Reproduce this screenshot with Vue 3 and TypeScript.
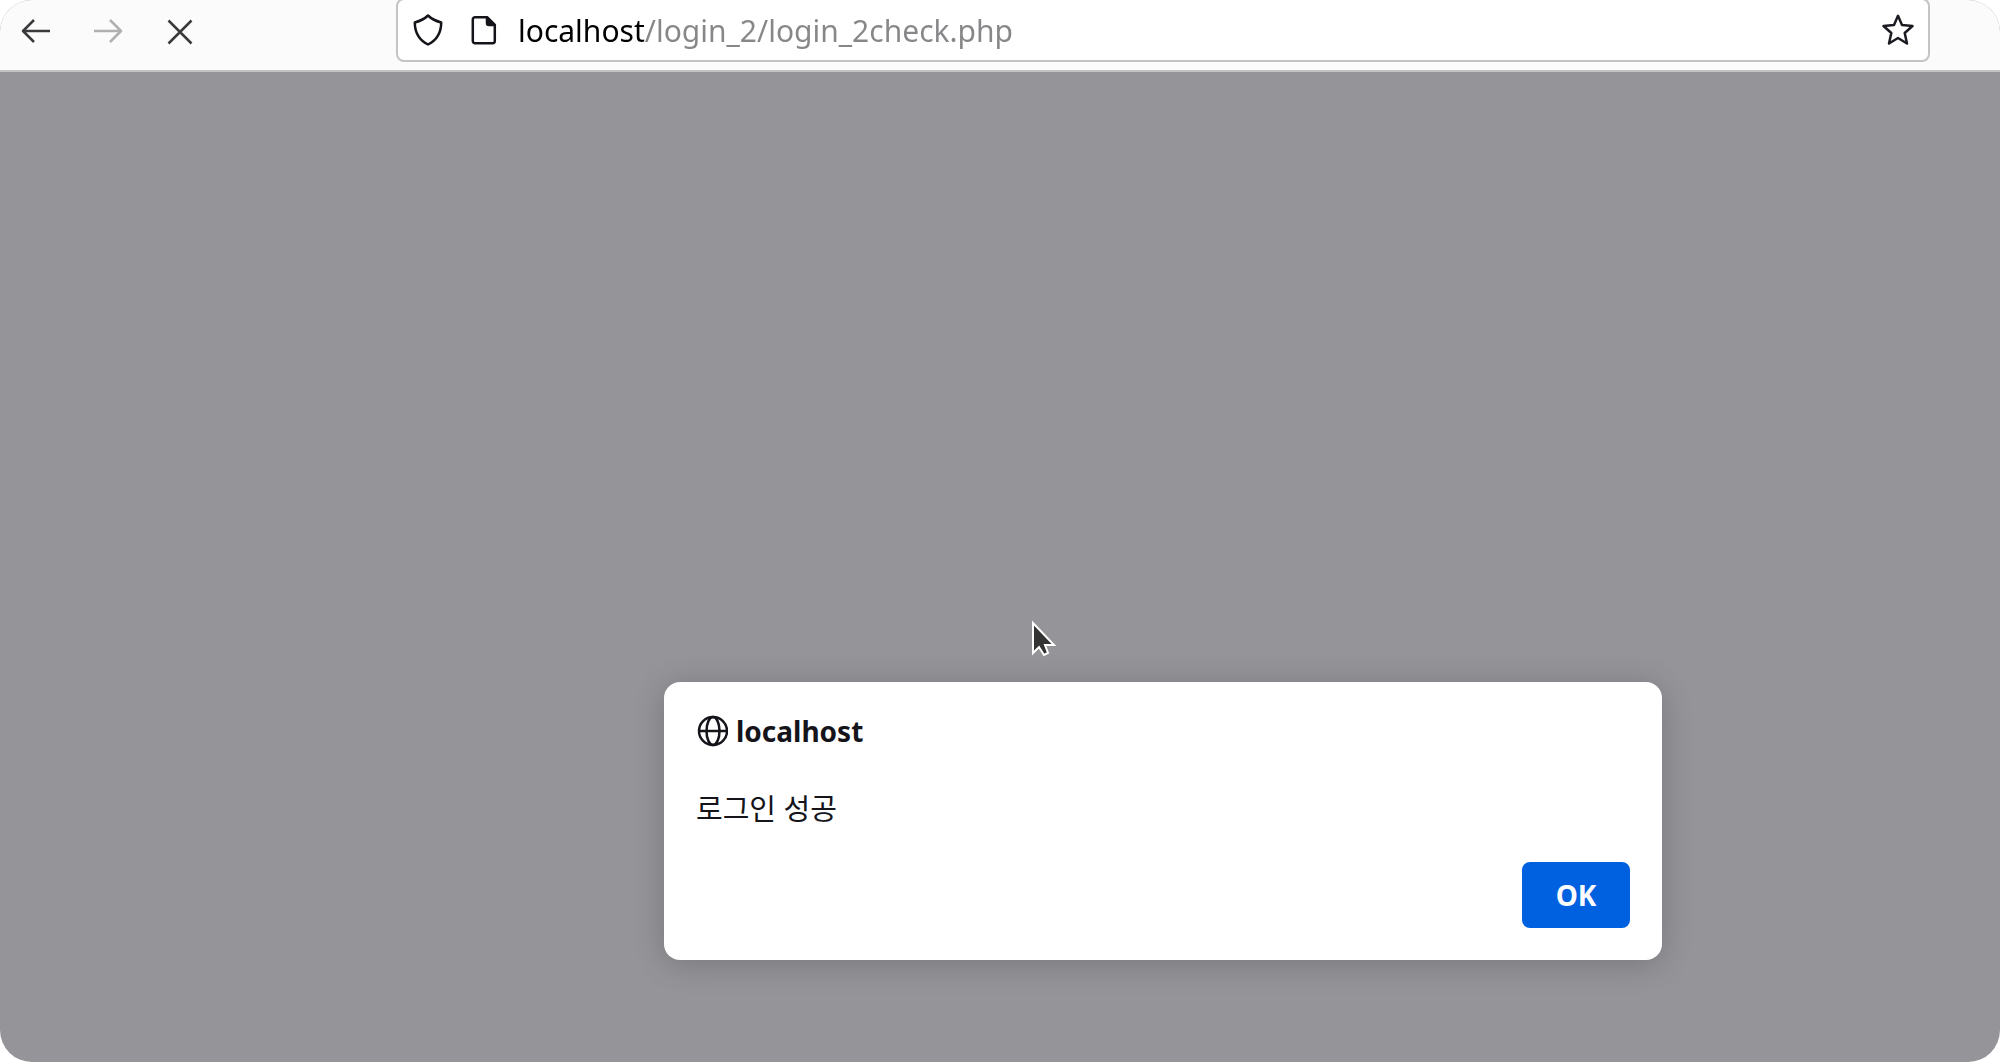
<script setup lang="ts">
import { ref } from 'vue'

const address = ref('localhost/login_2/login_2check.php')
const host = 'localhost'
const message = '로그인 성공'
const open = ref(true)
</script>

<template>
  <div class="window">
    <header class="toolbar">
      <nav class="nav" aria-label="Navigation">
        <button type="button" class="tool" aria-label="Back">
          <svg viewBox="0 0 32 32"><path d="M30 16H3M14 5L3 16l11 11" /></svg>
        </button>
        <button type="button" class="tool" aria-label="Forward" disabled>
          <svg viewBox="0 0 32 32"><path d="M2 16h27M18 5l11 11-11 11" /></svg>
        </button>
        <button type="button" class="tool" aria-label="Stop">
          <svg viewBox="0 0 32 32"><path d="M4.500 5.500l23 23M27.500 5.500l-23 23" /></svg>
        </button>
      </nav>
      <div class="urlbar">
        <div class="icons">
          <svg viewBox="0 0 32 32" aria-hidden="true">
            <path d="M16 1.500C13 4.500 8 7 2.800 8.500C2.800 19 7 26 16 30.500C25 26 29.200 19 29.200 8.500C24 7 19 4.500 16 1.500Z" />
          </svg>
          <svg viewBox="0 0 32 32" aria-hidden="true">
            <path d="M7 3.200h12l7.800 7.800v16a2.200 2.200 0 0 1-2.200 2.200H7A2.200 2.200 0 0 1 4.800 27V5.400A2.200 2.200 0 0 1 7 3.200z" />
            <path class="solid" d="M19 3.500V9a2 2 0 0 0 2 2h5.500z" />
          </svg>
        </div>
        <input v-model="address" class="address" type="text" aria-label="Address" spellcheck="false" />
        <button type="button" class="tool star" aria-label="Bookmark">
          <svg viewBox="0 0 32 32">
            <path d="M16 1.800l4 9.200 10.500 1-7.800 7 2.300 10.500-9-5.500-9 5.500L9.300 19 1.500 12 12 11z" />
          </svg>
        </button>
      </div>
    </header>

    <main class="page">
      <section v-if="open" class="dialog" role="alertdialog" aria-labelledby="origin" aria-describedby="message">
        <h1 id="origin" class="origin">
          <svg viewBox="0 0 32 32" aria-hidden="true">
            <circle cx="17" cy="16" r="14" />
            <ellipse cx="17" cy="16" rx="6.500" ry="14" />
            <path d="M3 16h28" />
          </svg>
          <span>{{ host }}</span>
        </h1>
        <p id="message" class="message">{{ message }}</p>
        <button type="button" class="ok" @click="open = false">OK</button>
      </section>
      <svg class="pointer" viewBox="0 0 28 42" aria-hidden="true">
        <path class="arrow" d="M3 5v30l6-6 5 8 4-2-3-8h9z" />
      </svg>
    </main>
  </div>
</template>

<style>
body {
  background: #fff;
}
</style>

<style scoped>
.window {
  display: flex;
  flex-direction: column;
  min-height: 100vh;
  overflow: hidden;
  border-radius: 32px;
  background: #959499;
  font-family: 'Noto Sans', 'Noto Sans CJK KR', sans-serif;
  color: #15141a;
}

.toolbar {
  display: flex;
  box-sizing: border-box;
  height: 72px;
  padding-right: 70px;
  border-bottom: 2px solid #c4c4c4;
  background: #fbfbfb;
}

.nav {
  display: flex;
  gap: 40px;
  width: 396px;
  padding: 15px 20px 0;
  box-sizing: border-box;
}

.tool {
  width: 32px;
  height: 32px;
  padding: 0;
  border: 0;
  background: none;
  color: #3a3a3d;
}

.tool:disabled {
  color: #b0b0b0;
}

svg {
  display: block;
  flex: none;
  width: 32px;
  height: 32px;
  fill: none;
  stroke: currentColor;
  stroke-width: 2.5;
  stroke-linejoin: round;
}

.urlbar {
  display: flex;
  flex: 1;
  align-items: center;
  gap: 18px;
  box-sizing: border-box;
  height: 64px;
  margin-top: -2px;
  padding: 0 14px;
  border: 2px solid #c4c4c4;
  border-radius: 8px;
  background: #fff;
}

.icons {
  display: flex;
  gap: 24px;
}

.solid {
  fill: currentColor;
}

.address {
  flex: 1;
  min-width: 0;
  height: 48px;
  padding: 0;
  border: 0;
  outline: 0;
  background: linear-gradient(to right, #000 127px, #87878a 127px);
  background-clip: text;
  color: transparent;
  caret-color: #000;
  font-family: inherit;
  font-size: 30px;
}

.star {
  color: #1c1b22;
}

.page {
  position: relative;
  flex: 1;
}

.dialog {
  position: absolute;
  top: 610px;
  left: 33.2%;
  display: flex;
  flex-direction: column;
  box-sizing: border-box;
  width: 49.9%;
  padding: 32px;
  border-radius: 16px;
  background: #fff;
  box-shadow: 0 4px 32px rgba(0, 0, 0, 0.2);
}

.origin {
  display: flex;
  align-items: center;
  gap: 8px;
  margin: 0;
  font-size: 28px;
  font-weight: 700;
  line-height: 34px;
}

.message {
  margin: 41px 0 33px;
  font-size: 29px;
  line-height: 40px;
}

.ok {
  align-self: flex-end;
  width: 108px;
  height: 66px;
  padding: 0;
  border: 0;
  border-radius: 8px;
  background: #0061e0;
  color: #fbfbfe;
  font-family: inherit;
  font-size: 28px;
  font-weight: 700;
}

.pointer {
  position: absolute;
  top: 546px;
  left: 51.5%;
  width: 28px;
  height: 42px;
}

.arrow {
  fill: #333;
  stroke: #fff;
  stroke-width: 2;
  stroke-linejoin: miter;
}
</style>
